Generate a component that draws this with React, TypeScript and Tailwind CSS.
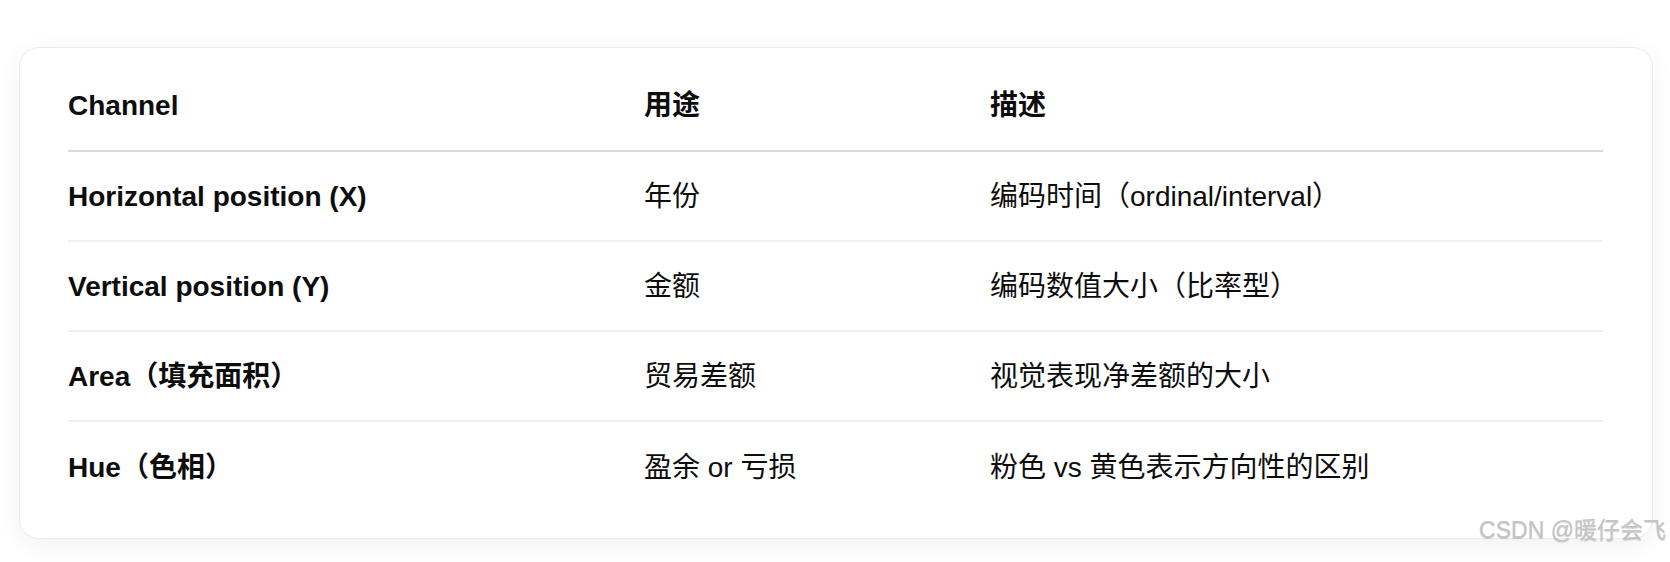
const rows = [
  { channel: 'Horizontal position (X)', use: '年份', desc: '编码时间（ordinal/interval）' },
  { channel: 'Vertical position (Y)', use: '金额', desc: '编码数值大小（比率型）' },
  { channel: 'Area（填充面积）', use: '贸易差额', desc: '视觉表现净差额的大小' },
  { channel: 'Hue（色相）', use: '盈余 or 亏损', desc: '粉色 vs 黄色表示方向性的区别' },
]

const font = { fontFamily: '"Liberation Sans", "Noto Sans CJK SC", sans-serif' }

export default function App() {
  return (
    <div className="relative h-[562px] w-full overflow-hidden bg-white pl-[19px] pt-[47px]" style={font}>
      {/* card */}
      <div className="w-[1634px] rounded-[20px] border border-[#ececec] bg-white pb-[26px] pl-[48px] pr-[49px] pt-[14px] shadow-[0_6px_24px_rgba(0,0,0,0.06)]">
        {/* header */}
        <div className="grid h-[90px] grid-cols-[576px_346px_1fr] items-center border-b-2 border-[#d9d9d9] text-[28px] font-bold leading-[34px] text-[#0d0d0d]">
          <div>Channel</div>
          <div>用途</div>
          <div>描述</div>
        </div>

        {rows.map((r, i) => (
          <div
            key={r.channel}
            className={`grid h-[90px] grid-cols-[576px_346px_1fr] items-center pt-[2px] text-[28px] leading-[34px] text-[#0d0d0d] ${
              i < rows.length - 1 ? 'border-b-2 border-[#f0f0f0]' : ''
            }`}
          >
            <div className="font-bold">{r.channel}</div>
            <div>{r.use}</div>
            <div>{r.desc}</div>
          </div>
        ))}
      </div>

      {/* watermark */}
      <div className="absolute bottom-[18px] right-[4px] text-[23px] leading-[28px] text-[#c4c4c4] [text-shadow:0_1px_1px_rgba(0,0,0,0.18)]">
        CSDN @暖仔会飞
      </div>
    </div>
  )
}
